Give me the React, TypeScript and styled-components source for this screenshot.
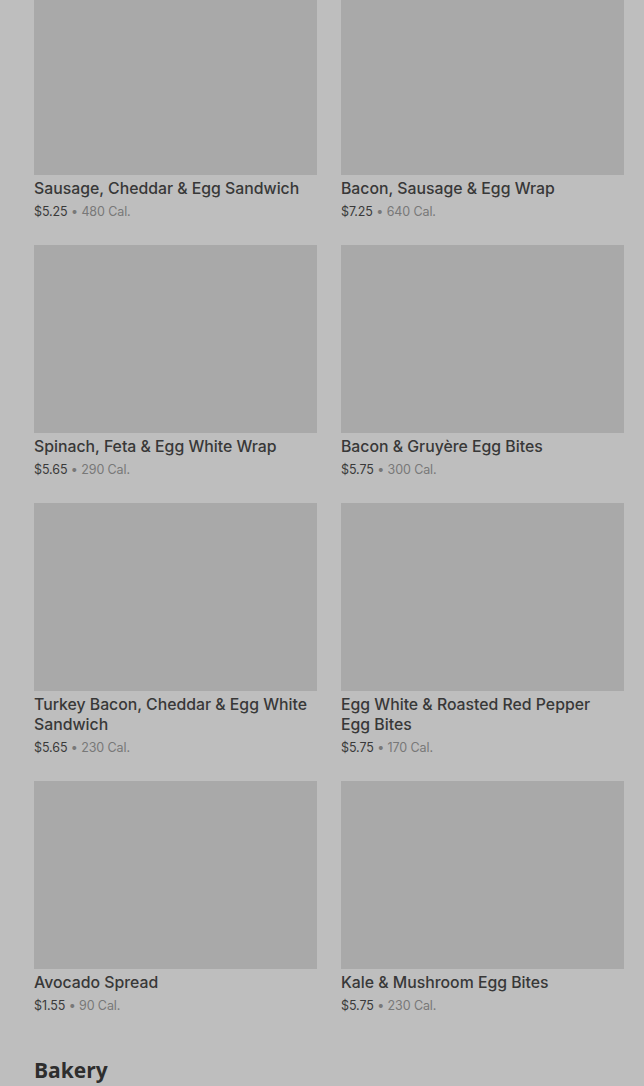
import React from "react";
import styled, { createGlobalStyle } from "styled-components";

const Global = createGlobalStyle`
  html, body { margin: 0; padding: 0; background: #bebebe; }
  body { font-family: Inter, Roboto, "Liberation Sans", Arial, sans-serif; overflow: hidden; }
`;

const Page = styled.div`
  padding: 0 20px 0 34px;
  margin-top: -13px;
`;

const Grid = styled.div`
  display: grid;
  grid-template-columns: 1fr 1fr;
  column-gap: 24px;
  row-gap: 24px;
`;

const Card = styled.div`
  display: flex;
  flex-direction: column;
`;

const Thumb = styled.div`
  height: 188px;
  background: #a9a9a9;
`;

const Title = styled.div`
  margin-top: 4px;
  padding-right: 6px;
  font-size: 15.8px;
  line-height: 20px;
  font-weight: 500;
  color: #383838;
`;

const Meta = styled.div`
  margin-top: 4px;
  font-size: 12.5px;
  line-height: 18px;
  color: #3a3a3a;
  letter-spacing: -0.1px;
`;

const Cal = styled.span`
  color: #787878;
`;

const Heading = styled.h2`
  margin: 42px 0 0;
  font-size: 21px;
  line-height: 26px;
  font-weight: 700;
  color: #2e2e2e;
  font-family: "Open Sans", Inter, sans-serif;
`;

const items = [
  { t: "Sausage, Cheddar & Egg Sandwich", p: "$5.25", c: "480 Cal." },
  { t: "Bacon, Sausage & Egg Wrap", p: "$7.25", c: "640 Cal." },
  { t: "Spinach, Feta & Egg White Wrap", p: "$5.65", c: "290 Cal." },
  { t: "Bacon & Gruyère Egg Bites", p: "$5.75", c: "300 Cal." },
  { t: "Turkey Bacon, Cheddar & Egg White Sandwich", p: "$5.65", c: "230 Cal." },
  { t: "Egg White & Roasted Red Pepper Egg Bites", p: "$5.75", c: "170 Cal." },
  { t: "Avocado Spread", p: "$1.55", c: "90 Cal." },
  { t: "Kale & Mushroom Egg Bites", p: "$5.75", c: "230 Cal." },
];

export default function App() {
  return (
    <>
      <Global />
      <Page>
        <Grid>
          {items.map((it) => (
            <Card key={it.t}>
              <Thumb />
              <Title>{it.t}</Title>
              <Meta>
                {it.p} <Cal>• {it.c}</Cal>
              </Meta>
            </Card>
          ))}
        </Grid>
        <Heading>Bakery</Heading>
      </Page>
    </>
  );
}
